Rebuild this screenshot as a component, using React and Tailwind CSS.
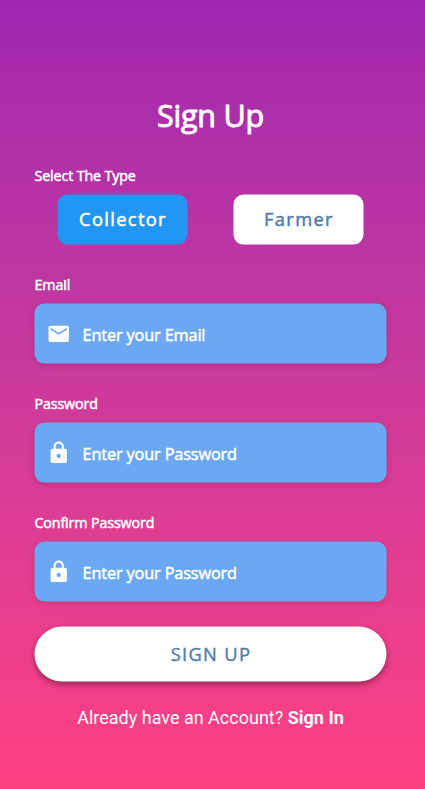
import { MdEmail, MdLock } from "react-icons/md";

const boldStroke = "[-webkit-text-stroke:0.5px_currentColor]";

function Label({ children }) {
  return (
    <div className={`h-5 text-[14.3px] leading-5 tracking-[-0.14px] whitespace-nowrap ${boldStroke}`}>
      {children}
    </div>
  );
}

function Field({ label, hint, icon: Icon }) {
  return (
    <div className="mb-[30px]">
      <Label>{label}</Label>
      <div className="mt-[9px] flex h-[60px] transform-[translate(-0.5px,-0.4px)] items-center rounded-[10px] bg-[#6CA8F1] pl-[12.5px] shadow-[0_2px_6px_rgba(0,0,0,0.12)]">
        <Icon className="size-[24.5px] shrink-0" />
        <span className="ml-[11.5px] pt-[1.4px] text-[16.3px] leading-6 tracking-[-0.14px] whitespace-nowrap [-webkit-text-stroke:0.5px_currentColor]">
          {hint}
        </span>
      </div>
    </div>
  );
}

export default function App() {
  return (
    <main className="h-[789px] w-[425px] overflow-hidden bg-linear-to-b from-[#9F27AF] to-[#FF4081] pr-[38.5px] pl-[34.5px] font-['Open_Sans',sans-serif] text-white">
      <h1 className="mt-[95px] h-10 text-center text-[30.5px] leading-10 font-normal tracking-[-0.25px] whitespace-nowrap [-webkit-text-stroke:0.9px_currentColor]">
        Sign Up
      </h1>
      <div className="mt-[31px]">
        <Label>Select The Type</Label>
      </div>
      <div className="mt-[9px] flex transform-[translate(-0.5px,-0.4px)] gap-[46px] pl-[23px]">
        <button className={`h-[50px] w-[130px] rounded-[10px] bg-[#2196F3] pb-[2px] pl-0.5 text-[18.3px] tracking-[1.35px] ${boldStroke}`}>
          Collector
        </button>
        <button className={`h-[50px] w-[130px] rounded-[10px] bg-white pb-[2px] pl-0.5 text-[18.3px] tracking-[1.35px] text-[#527DAA] ${boldStroke}`}>
          Farmer
        </button>
      </div>
      <div className="mt-[30px]">
        <Field label="Email" hint="Enter your Email" icon={MdEmail} />
        <Field label="Password" hint="Enter your Password" icon={MdLock} />
        <Field label="Confirm Password" hint="Enter your Password" icon={MdLock} />
      </div>
      <button className="-mt-[5px] block h-[55px] w-full transform-[translate(-0.5px,-0.4px)] rounded-full bg-white pb-[2px] pl-0.5 text-[18.3px] tracking-[1.35px] text-[#527DAA] shadow-[0_3px_6px_rgba(0,0,0,0.38)] [-webkit-text-stroke:0.4px_currentColor]">
        SIGN UP
      </button>
      <p className="mt-[24px] text-center font-['Roboto',sans-serif] text-[18px] leading-6 whitespace-nowrap">
        Already have an Account? <span className="font-bold">Sign In</span>
      </p>
    </main>
  );
}
